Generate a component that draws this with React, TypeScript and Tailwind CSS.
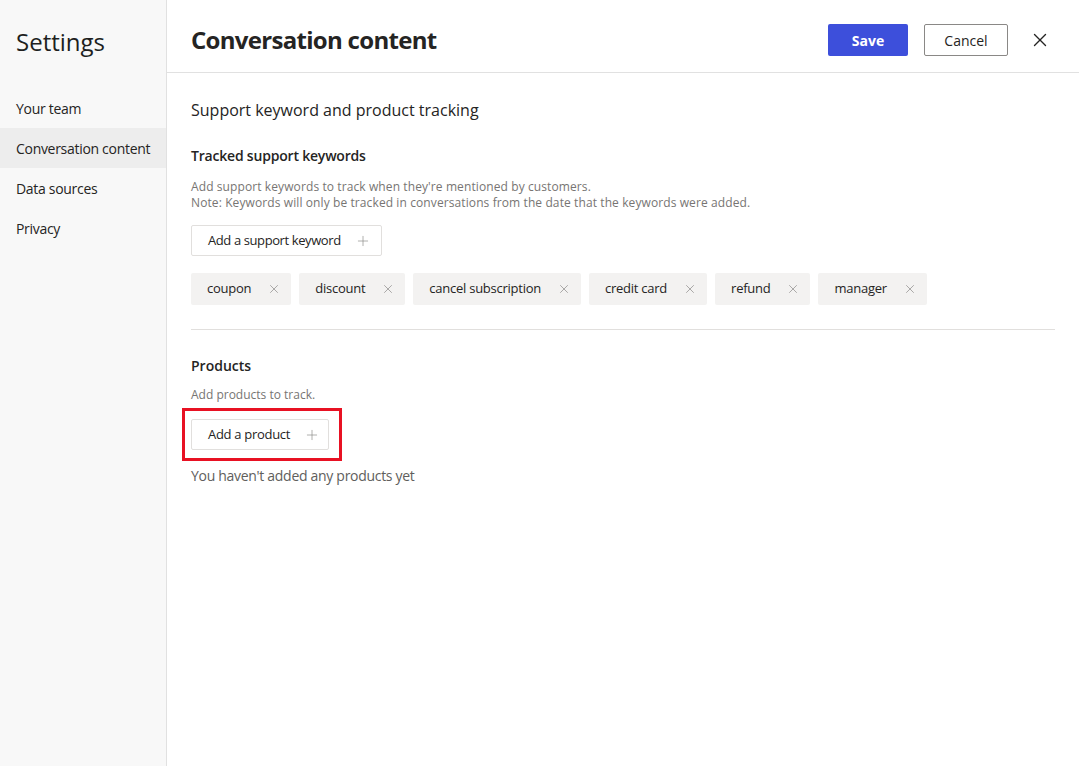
import { X, Plus } from "lucide-react";

const keywords = ["coupon", "discount", "cancel subscription", "credit card", "refund", "manager"];

const nav = ["Your team", "Conversation content", "Data sources", "Privacy"];

export default function App() {
  return (
    <div className="flex h-[766px] w-full bg-white text-[#252423] font-['Open_Sans',sans-serif]">
      <aside className="w-[167px] shrink-0 bg-[#f8f8f8] border-r border-[#e1e1e1] flex flex-col">
        <h1 className="pl-4 pt-[26px] text-[24px] leading-[32px] text-[#201f1e]">Settings</h1>
        <ul className="mt-[30px] text-[14px] tracking-[-0.3px]">
          {nav.map((n) => (
            <li
              key={n}
              className={
                "h-10 flex items-center pl-4 " + (n === "Conversation content" ? "bg-[#ededed]" : "")
              }
            >
              {n}
            </li>
          ))}
        </ul>
      </aside>

      <main className="flex-1 flex flex-col min-w-0">
        <header className="h-[73px] shrink-0 border-b border-[#e1e1e1] flex items-center pt-2 pl-6 pr-[28px]">
          <h2 className="flex-1 text-[24px] font-bold tracking-[-0.7px]">Conversation content</h2>
          <button className="h-8 w-20 rounded-[2px] bg-[#3d4fdb] text-white text-[14px] font-bold">Save</button>
          <button className="ml-4 h-8 w-[84px] rounded-[2px] border border-[#8a8886] text-[14px]">Cancel</button>
          <button className="ml-[21px] text-[#252423]">
            <X size={22} strokeWidth={1.5} />
          </button>
        </header>

        <div className="pl-6 pr-6 pt-[26px]">
          <h3 className="text-[16px] leading-[22px]">Support keyword and product tracking</h3>

          <h4 className="mt-[25px] text-[14px] font-semibold leading-[20px] tracking-[-0.2px]">Tracked support keywords</h4>
          <p className="mt-[13px] text-[12px] leading-4 tracking-[0.1px] text-[#777573]">
            Add support keywords to track when they're mentioned by customers.
            <br />
            Note: Keywords will only be tracked in conversations from the date that the keywords were added.
          </p>

          <button className="mt-[14px] h-[31px] flex items-center gap-[14px] border border-[#e1dfdd] rounded-[2px] pl-4 pr-[10px] text-[13px] tracking-[-0.4px]">
            Add a support keyword
            <Plus size={16} strokeWidth={1} className="text-[#8a8886]" />
          </button>

          <div className="mt-[17px] flex gap-[8px]">
            {keywords.map((k) => (
              <div
                key={k}
                className="h-8 flex items-center gap-[16px] bg-[#f3f2f1] rounded-[2px] pl-4 pr-[10px] text-[13px] tracking-[-0.25px]"
              >
                <span>{k}</span>
                <X size={14} strokeWidth={1.2} className="text-[#8a8886]" />
              </div>
            ))}
          </div>

          <div className="mt-[24px] border-t border-[#e1dfdd]" />

          <h4 className="mt-[26px] text-[14px] font-semibold leading-[20px]">Products</h4>
          <p className="mt-[11px] text-[12px] leading-4 text-[#777573]">Add products to track.</p>

          <div className="mt-[5px] -ml-[9px] w-[160px] h-[53px] border-[3px] border-[#e81123] flex items-center pl-[6px]">
            <button className="h-[31px] flex items-center gap-[14px] border border-[#e1dfdd] rounded-[2px] pl-4 pr-[8px] text-[13px] tracking-[-0.3px]">
              Add a product
              <Plus size={16} strokeWidth={1} className="text-[#8a8886]" />
            </button>
          </div>

          <p className="mt-[4px] text-[14px] tracking-[-0.3px] text-[#605e5c]">You haven't added any products yet</p>
        </div>
      </main>
    </div>
  );
}
